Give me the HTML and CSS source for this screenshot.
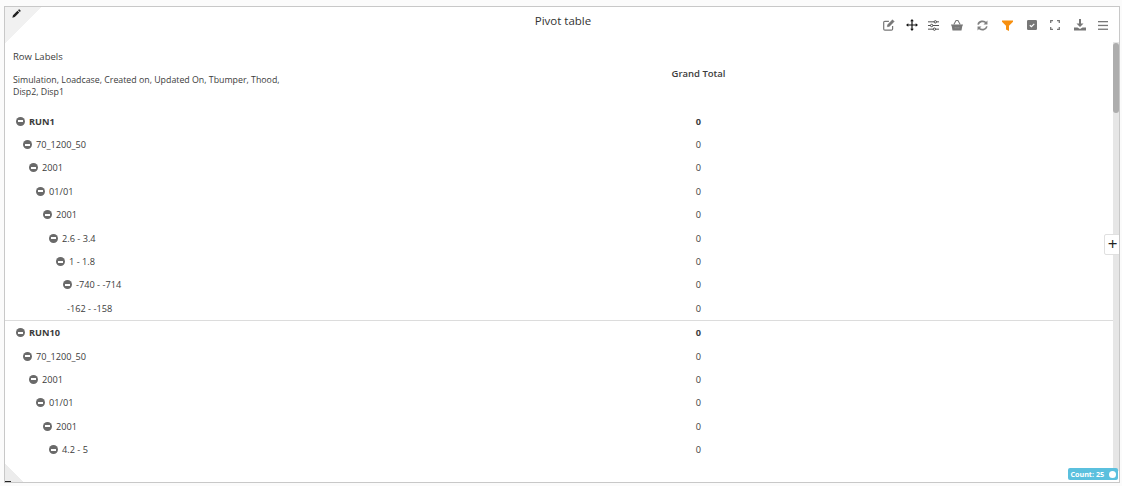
FILE: index.html
```html
<!DOCTYPE html>
<html lang="en">
<head>
<meta charset="utf-8">
<title>Pivot table</title>
<link rel="stylesheet" href="styles.css">
</head>
<body>
<div class="card">
  <div class="corner-tl"></div>
  <svg class="pencil" viewBox="0 0 12 12"><path d="M0.5 11.5l0.8-3.2 6-6 2.4 2.4-6 6z M8 1.6l1-1q.5-.4 1 0l1.4 1.4q.4.5 0 1l-1 1z" fill="#222"/></svg>
  <div class="corner-bl"></div>
  <div class="dash"></div>

  <header class="head">
    <h1 class="title">Pivot table</h1>
    <div class="tools">
      <span class="tool w22"><svg viewBox="0 0 12 12" width="12" height="12" fill="none" stroke="#777" stroke-width="1.200"><path d="M9.600 7v3a1.200 1.200 0 0 1-1.200 1.200h-6.500a1.200 1.200 0 0 1-1.200-1.200v-6.500a1.200 1.200 0 0 1 1.200-1.200h4"/><path d="M4.300 7.700l.3-2 4.900-4.900 1.700 1.700-4.900 4.900z" fill="#777" stroke-width=".5"/></svg></span>
      <span class="tool w23"><svg viewBox="0 0 12 12" width="12" height="12" fill="#111"><path d="M6 0l1.800 2.300h-1.200v3.100h3.100v-1.200l2.300 1.800-2.300 1.800v-1.200h-3.100v3.100h1.200l-1.800 2.300-1.800-2.300h1.200v-3.100h-3.100v1.200l-2.300-1.800 2.300-1.800v1.200h3.100v-3.100h-1.200z"/></svg></span>
      <span class="tool w20"><svg viewBox="0 0 12 12" width="11" height="11" fill="none" stroke="#444" stroke-width="1"><path d="M0 2h12M0 6h12M0 10h12"/><circle cx="8" cy="2" r="1.300" fill="#fff"/><circle cx="4" cy="6" r="1.300" fill="#fff"/><circle cx="7" cy="10" r="1.300" fill="#fff"/></svg></span>
      <span class="tool w28"><svg viewBox="0 0 13 12" width="12" height="11"><path d="M0 5h13v1h-.6l-1 5.500h-9.800l-1-5.500h-.6z" fill="#777"/><path d="M3 5l2.500-4.500h2l2.500 4.500" stroke="#777" stroke-width="1.100" fill="none"/><path d="M4 8.500h5" stroke="#aaa" stroke-width="1" stroke-dasharray="1 1"/></svg></span>
      <span class="tool w22"><svg viewBox="0 0 12 12" width="11" height="11" fill="none" stroke="#808080" stroke-width="1.800"><path d="M1.200 5a5 4.600 0 0 1 8.800-1.800"/><path d="M10.800 7a5 4.600 0 0 1-8.800 1.800"/><path d="M11.400.5v4.300h-4.300z M.6 11.500v-4.300h4.300z" fill="#808080" stroke="none"/></svg></span>
      <span class="tool w28"><svg viewBox="0 0 11 11" width="11" height="11"><path d="M0 0.500h11v1.300l-4 4v5.200l-3-1.500v-3.700l-4-4z" fill="#f78f0e"/></svg></span>
      <span class="tool w22"><svg viewBox="0 0 10 10" width="10" height="10"><rect width="10" height="10" rx="1.200" fill="#777"/><path d="M2.800 5.200l1.600 1.500 2.900-2.900" stroke="#fff" stroke-width="1.200" fill="none"/></svg></span>
      <span class="tool w24"><svg viewBox="0 0 10 10" width="10" height="10" fill="none" stroke="#777" stroke-width="1.300"><path d="M.7 3v-2.300h2.300M7 .7h2.300v2.300M9.300 7v2.300h-2.300M3 9.300h-2.300v-2.300"/></svg></span>
      <span class="tool w26"><svg viewBox="0 0 12 12" width="12" height="12" fill="#777"><path d="M5 0h2v4.500h2.500l-3.500 3.500-3.500-3.500h2.500z"/><path d="M0 8.500h3.500l2.500 1.500 2.500-1.500h3.500v3h-12z"/></svg></span>
      <span class="tool w20"><svg viewBox="0 0 10 9" width="10" height="9" fill="#777"><rect width="10" height="1.300"/><rect y="3.800" width="10" height="1.300"/><rect y="7.600" width="10" height="1.300"/></svg></span>
    </div>
  </header>

  <div class="scrollbar"><div class="thumb"></div></div>
  <button class="add" type="button">+</button>

  <div class="pivot">
    <div class="pivot-head">
      <div class="labels">
        <div class="row-labels">Row Labels</div>
        <div class="fields">Simulation, Loadcase, Created on, Updated On, Tbumper, Thood, Disp2, Disp1</div>
      </div>
      <div class="grand">Grand Total</div>
    </div>

    <div class="group">
      <div class="row total lv0"><span class="label"><i class="minus"></i>RUN1</span><span class="val">0</span></div>
      <div class="row lv1"><span class="label"><i class="minus"></i>70_1200_50</span><span class="val">0</span></div>
      <div class="row lv2"><span class="label"><i class="minus"></i>2001</span><span class="val">0</span></div>
      <div class="row lv3"><span class="label"><i class="minus"></i>01/01</span><span class="val">0</span></div>
      <div class="row lv4"><span class="label"><i class="minus"></i>2001</span><span class="val">0</span></div>
      <div class="row lv5"><span class="label"><i class="minus"></i>2.6 - 3.4</span><span class="val">0</span></div>
      <div class="row lv6"><span class="label"><i class="minus"></i>1 - 1.8</span><span class="val">0</span></div>
      <div class="row lv7"><span class="label"><i class="minus"></i>-740 - -714</span><span class="val">0</span></div>
      <div class="row lv8"><span class="label">-162 - -158</span><span class="val">0</span></div>
    </div>
    <div class="group">
      <div class="row total lv0"><span class="label"><i class="minus"></i>RUN10</span><span class="val">0</span></div>
      <div class="row lv1"><span class="label"><i class="minus"></i>70_1200_50</span><span class="val">0</span></div>
      <div class="row lv2"><span class="label"><i class="minus"></i>2001</span><span class="val">0</span></div>
      <div class="row lv3"><span class="label"><i class="minus"></i>01/01</span><span class="val">0</span></div>
      <div class="row lv4"><span class="label"><i class="minus"></i>2001</span><span class="val">0</span></div>
      <div class="row lv5"><span class="label"><i class="minus"></i>4.2 - 5</span><span class="val">0</span></div>
    </div>
  </div>

  <div class="count">Count: 25 <i class="dot"></i></div>
</div>
</body>
</html>
```
FILE: styles.css
```css
* { box-sizing: border-box; }
html, body { height: 100%; }
body {
  margin: 0;
  padding: 6px 2px 3px 4px;
  background: #fbfbfb;
  font-family: "Open Sans", "Noto Sans", sans-serif;
  font-size: 9px;
  color: #3c3c3c;
  overflow: hidden;
}
.card {
  position: relative;
  height: 477px;
  background: #fff;
  border: 1px solid #c8c8c8;
  overflow: hidden;
}
.corner-tl {
  position: absolute;
  left: 0; top: 0;
  width: 37px; height: 37px;
  background: linear-gradient(135deg, #f1f1f1 50%, transparent 50%);
}
.corner-bl {
  position: absolute;
  left: 0; bottom: 0;
  width: 18px; height: 18px;
  background: linear-gradient(45deg, #ececec 50%, transparent 50%);
}
.dash {
  position: absolute;
  left: 0; bottom: 0;
  width: 6px; height: 1px;
  background: #222;
}
.pencil {
  position: absolute;
  left: 7px; top: 2px;
  width: 9px; height: 9px;
}
.head {
  position: relative;
  height: 36px;
}
.title {
  margin: 0;
  padding: 6px 0 0 2px;
  text-align: center;
  font-size: 11.500px;
  line-height: 16px;
  font-weight: 400;
  color: #333;
}
.tools {
  position: absolute;
  right: 6px; top: 12px;
  display: flex;
  align-items: center;
  height: 12px;
}
.tool { display: flex; justify-content: center; align-items: center; }
.w20 { width: 20px; }
.w22 { width: 22px; }
.w23 { width: 23px; }
.w24 { width: 24px; }
.w26 { width: 26px; }
.w28 { width: 28px; }
.scrollbar {
  position: absolute;
  right: 0; top: 35px; bottom: 11px;
  width: 6px;
  background: #e6e6e6;
}
.thumb {
  width: 6px; height: 70px;
  margin-top: 1px;
  border-radius: 3px;
  background: #adadad;
}
.add {
  position: absolute;
  right: -2px; top: 227px;
  width: 17px; height: 21px;
  padding: 0 0 2px;
  border: 1px solid #e0e0e0;
  border-radius: 2px;
  background: #fff;
  color: #222;
  font: 400 17px/17px "Open Sans", sans-serif;
}
.pivot { padding-right: 6px; }
.pivot-head {
  display: flex;
  height: 66.500px;
}
.labels { width: 663.500px; padding: 7px 0 0 8px; }
.row-labels { font-size: 9.500px; line-height: 13px; font-weight: 500; }
.fields { width: 278px; margin-top: 11px; line-height: 12px; font-size: 8.800px; }
.grand {
  width: 60px;
  padding-top: 24px;
  text-align: center;
  font-size: 9.500px;
  line-height: 13px;
  font-weight: 600;
}
.group + .group { border-top: 1px solid #dcdcdc; }
.row {
  display: flex;
  align-items: center;
  height: 23.400px;
  font-size: 9.200px;
}
.label { display: flex; align-items: center; width: 663.500px; }
.val { width: 60px; text-align: center; }
.total { font-weight: 700; }
.minus {
  position: relative;
  flex: none;
  width: 9px; height: 9px;
  margin-right: 4px;
  border-radius: 50%;
  background: #6a6a6a;
}
.minus::after {
  content: "";
  position: absolute;
  left: 2px; top: 3.500px;
  width: 5px; height: 2px;
  background: #fff;
}
.lv0 .label { padding-left: 11px; }
.lv1 .label { padding-left: 18px; }
.lv2 .label { padding-left: 24px; }
.lv3 .label { padding-left: 31px; }
.lv4 .label { padding-left: 38px; }
.lv5 .label { padding-left: 44px; }
.lv6 .label { padding-left: 51px; }
.lv7 .label { padding-left: 58px; }
.lv8 .label { padding-left: 62px; }
.count {
  position: absolute;
  right: 1px; bottom: 2px;
  display: flex;
  align-items: center;
  gap: 3px;
  height: 12px;
  padding: 0 2px 0 2px;
  border-radius: 2px;
  background: #5bc0de;
  color: #fff;
  font-size: 7.200px;
  font-weight: 700;
  white-space: pre;
}
.dot {
  width: 7px; height: 7px;
  border-radius: 50%;
  background: #fff;
}
```
